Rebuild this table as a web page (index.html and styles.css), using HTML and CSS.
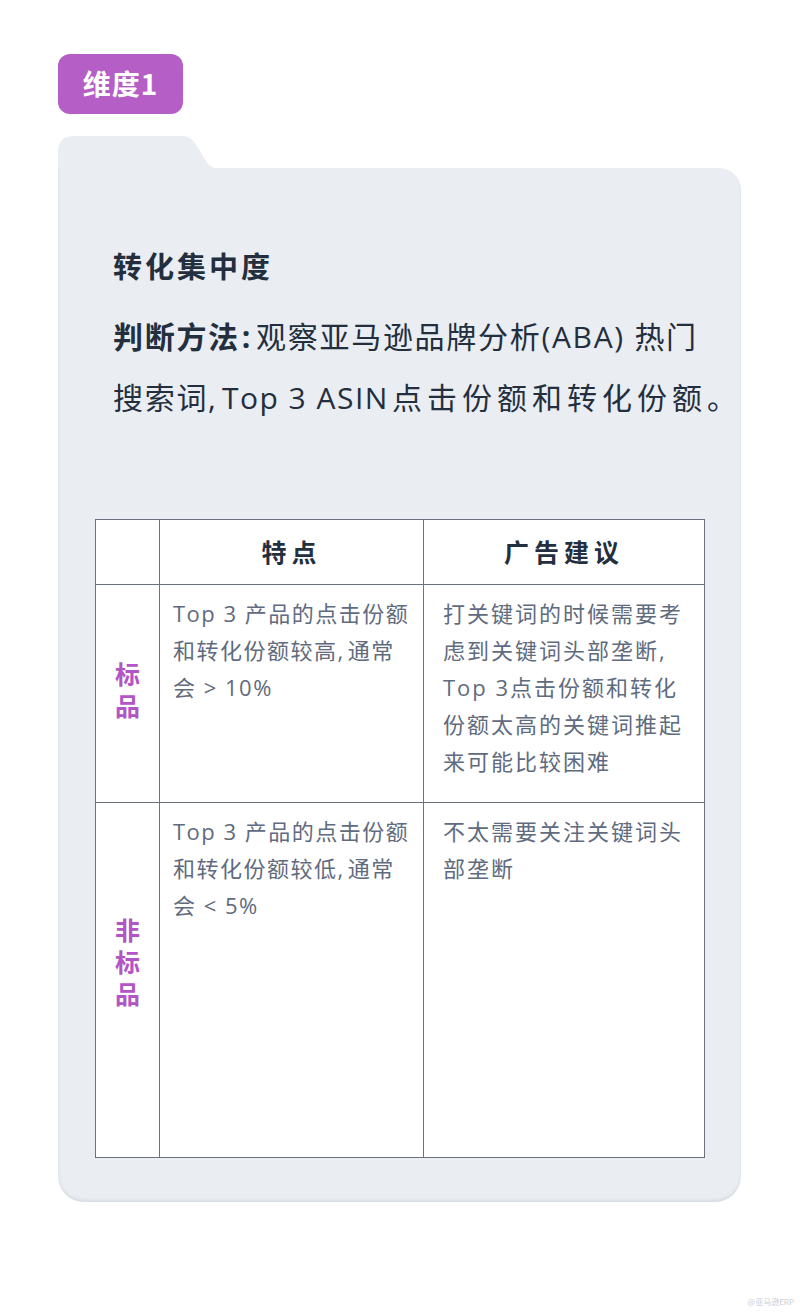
FILE: index.html
```html
<!DOCTYPE html>
<html lang="zh-CN">
<head>
  <meta charset="UTF-8">
  <meta name="viewport" content="width=device-width, initial-scale=1.0">
  <title>维度1 - 转化集中度</title>
  <link rel="stylesheet" href="styles.css">
</head>
<body>
  <div class="page">
    <div class="badge">维度1</div>

    <!-- Folder-style card -->
    <div class="folder">
      <div class="folder-tab">
        <svg width="160" height="33" viewBox="0 0 160 33">
          <path d="M0 33 L0 16 Q0 0 16 0 L124 0 Q132 0 137 7 L148 25 Q153 33 162 33 Z" fill="#eaedf1"/>
        </svg>
      </div>
      <div class="folder-body">
        <div class="intro">
          <h2 class="intro-title">转化集中度</h2>
          <p class="intro-text">
            <strong>判断方法<span class="colon">:</span></strong>观察亚马逊品牌分析(ABA) 热门<br>搜索词<span class="comma comma-wide">,</span><span class="latin">Top 3 ASIN</span><span class="line-wide">点击份额和转化份额。</span>
          </p>
        </div>

        <table class="compare">
          <tr class="row-head">
            <th class="col-label"></th>
            <th class="col-feature">特点</th>
            <th class="col-advice">广告建议</th>
          </tr>
          <tr class="row-std">
            <td class="label"><span class="label-text">标品</span></td>
            <td class="cell cell-feature">Top 3 产品的点击份额<br>和转化份额较高<span class="comma">,</span>通常<br>会 &gt; 10%</td>
            <td class="cell cell-advice">打关键词的时候需要考<br>虑到关键词头部垄断<span class="comma">,</span><br>Top 3点击份额和转化<br>份额太高的关键词推起<br>来可能比较困难</td>
          </tr>
          <tr class="row-nonstd">
            <td class="label label-low"><span class="label-text">非标品</span></td>
            <td class="cell cell-feature">Top 3 产品的点击份额<br>和转化份额较低<span class="comma">,</span>通常<br>会 &lt; 5%</td>
            <td class="cell cell-advice">不太需要关注关键词头<br>部垄断</td>
          </tr>
        </table>
      </div>
    </div>
  </div>

  <div class="watermark">@亚马逊ERP</div>
</body>
</html>
```

FILE: styles.css
```css
* {
  margin: 0;
  padding: 0;
  box-sizing: border-box;
}

body {
  font-family: "Open Sans", "Noto Sans CJK SC", sans-serif;
  background: #ffffff;
  color: #232f3e;
  width: 800px;
  min-height: 1315px;
  position: relative;
}

.page {
  padding: 54px 59px 0 58px;
}

.badge {
  width: 125px;
  height: 60px;
  border-radius: 12px;
  background: #b55fc6;
  color: #ffffff;
  font-family: "Noto Sans CJK SC", sans-serif;
  font-size: 28px;
  font-weight: 700;
  letter-spacing: 1px;
  display: flex;
  align-items: center;
  justify-content: center;
  padding-bottom: 2px;
}

.folder {
  margin-top: 22px;
}

.folder-tab {
  height: 32px;
  overflow: hidden;
}

.folder-tab svg {
  display: block;
}

.folder-body {
  background: #eaedf1;
  border-radius: 0 22px 26px 26px;
  padding: 75px 37px 44px;
  box-shadow: inset 0 -2px 3px rgba(180, 188, 200, 0.35);
}

.intro {
  padding: 0 18px;
}

.intro-title {
  font-family: "Noto Sans CJK SC", sans-serif;
  font-size: 29px;
  font-weight: 700;
  letter-spacing: 3px;
  line-height: 44px;
  color: #232f3e;
}

.intro-text {
  margin-top: 18px;
  font-size: 30px;
  letter-spacing: 1.7px;
  line-height: 61px;
  color: #232f3e;
  white-space: nowrap;
}

.intro-text strong {
  font-family: "Noto Sans CJK SC", sans-serif;
  font-weight: 700;
}

.latin {
  letter-spacing: 1.5px;
  margin-right: 3px;
}

.line-wide {
  letter-spacing: 5px;
}

.colon {
  font-family: "Open Sans", sans-serif;
  margin: 0 4px 0 2px;
}

.comma {
  font-family: "Open Sans", sans-serif;
  margin-right: 3px;
}

.comma-wide {
  letter-spacing: 0;
  margin-right: 6px;
}

.compare {
  margin-top: 91px;
  width: 609px;
  border-collapse: collapse;
  table-layout: fixed;
  background: #ffffff;
}

.compare th,
.compare td {
  border: 1px solid #6b717d;
}

.col-label {
  width: 64px;
}

.col-feature {
  width: 264px;
}

.col-advice {
  width: 281px;
}

.row-head {
  height: 65px;
}

.row-head th {
  font-family: "Noto Sans CJK SC", sans-serif;
  font-size: 25px;
  font-weight: 700;
  letter-spacing: 5px;
  color: #232f3e;
  text-align: center;
  vertical-align: middle;
  padding-bottom: 2px;
}

.row-std {
  height: 218px;
}

.row-nonstd {
  height: 355px;
}

.label {
  text-align: center;
  vertical-align: middle;
  padding-top: 6px;
}

.label-low {
  padding-top: 0;
  padding-bottom: 24px;
}

.label-text {
  display: inline-block;
  writing-mode: vertical-rl;
  text-orientation: upright;
  font-family: "Noto Sans CJK SC", sans-serif;
  font-size: 25px;
  font-weight: 700;
  letter-spacing: 7px;
  line-height: 30px;
  color: #b255c5;
}

.cell {
  vertical-align: top;
  font-size: 22px;
  line-height: 37px;
  color: #5f6b7e;
  white-space: nowrap;
  padding-top: 10px;
}

.cell-feature {
  padding-left: 13px;
  letter-spacing: 1.5px;
}

.cell-advice {
  padding-left: 19px;
  letter-spacing: 2px;
}

.watermark {
  position: absolute;
  right: 6px;
  bottom: 8px;
  font-family: "Noto Sans CJK SC", sans-serif;
  font-size: 8px;
  color: #c9ccd1;
}
```
